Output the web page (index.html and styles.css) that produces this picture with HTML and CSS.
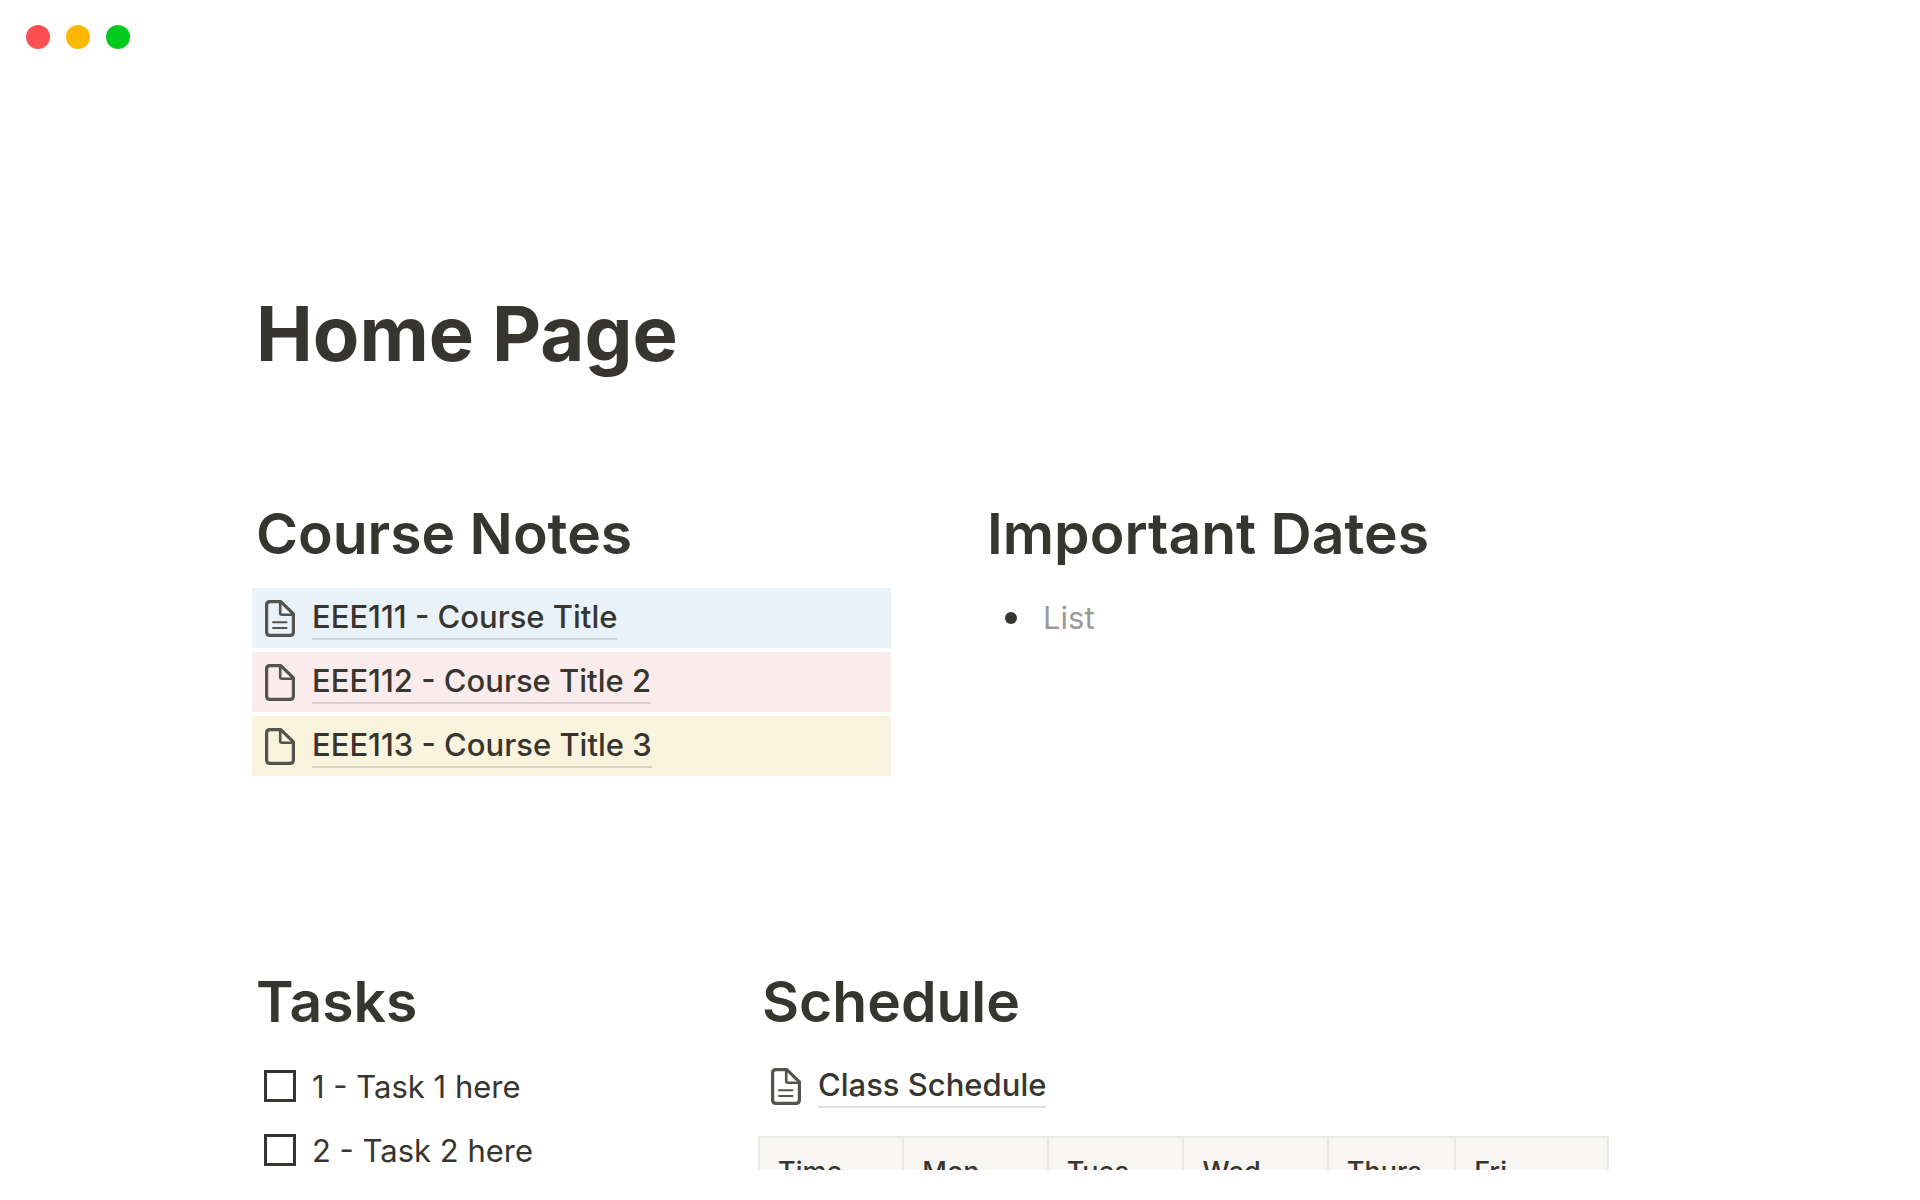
FILE: index.html
```html
<!DOCTYPE html>
<html lang="en">
<head>
    <meta charset="UTF-8">
    <meta name="viewport" content="width=device-width, initial-scale=1.0">
    <title>Home Page</title>
    <link rel="stylesheet" href="styles.css">
</head>
<body>

    <!-- Shared page icons -->
    <svg class="sprite" aria-hidden="true">
        <symbol id="page-empty" viewBox="0 0 30 37">
            <path d="M5 1.6H15.8L28.4 13.8V32Q28.4 35.4 25 35.4H5Q1.6 35.4 1.6 32V5Q1.6 1.6 5 1.6Z" fill="none" stroke="currentColor" stroke-width="3.2" stroke-linejoin="round"/>
            <path d="M15.2 2V12.8Q15.2 14.8 17.2 14.8H28" fill="none" stroke="currentColor" stroke-width="2.6"/>
        </symbol>
        <symbol id="page-text" viewBox="0 0 30 37">
            <use href="#page-empty"/>
            <path d="M8 22.3H21.5M8 28H21.5" fill="none" stroke="currentColor" stroke-width="2" stroke-linecap="round"/>
        </symbol>
    </svg>

    <div class="window">
        <div class="dots">
            <span class="dot red"></span>
            <span class="dot yellow"></span>
            <span class="dot green"></span>
        </div>

        <main class="page">
            <h1>Home Page</h1>

            <div class="columns top">
                <section>
                    <h2>Course Notes</h2>
                    <div class="list">
                        <div class="row blue">
                            <svg class="icon"><use href="#page-text"/></svg>
                            <a href="#">EEE111 - Course Title</a>
                        </div>
                        <div class="row pink">
                            <svg class="icon"><use href="#page-empty"/></svg>
                            <a href="#">EEE112 - Course Title 2</a>
                        </div>
                        <div class="row sand">
                            <svg class="icon"><use href="#page-empty"/></svg>
                            <a href="#">EEE113 - Course Title 3</a>
                        </div>
                    </div>
                </section>
                <section>
                    <h2>Important Dates</h2>
                    <ul class="dates">
                        <li>List</li>
                    </ul>
                </section>
            </div>

            <div class="columns bottom">
                <section>
                    <h2>Tasks</h2>
                    <div class="list">
                        <label class="task"><input type="checkbox">1 - Task 1 here</label>
                        <label class="task"><input type="checkbox">2 - Task 2 here</label>
                    </div>
                </section>
                <section>
                    <h2>Schedule</h2>
                    <div class="row">
                        <svg class="icon"><use href="#page-text"/></svg>
                        <a href="#">Class Schedule</a>
                    </div>
                    <table>
                        <colgroup>
                            <col class="wide"><col class="wide"><col class="mid"><col class="wide"><col class="narrow"><col class="last">
                        </colgroup>
                        <thead>
                            <tr>
                                <th>Time</th>
                                <th>Mon</th>
                                <th>Tues</th>
                                <th>Wed</th>
                                <th>Thurs</th>
                                <th>Fri</th>
                            </tr>
                        </thead>
                    </table>
                </section>
            </div>
        </main>
    </div>

</body>
</html>
```
FILE: styles.css
```css
* {
    box-sizing: border-box;
}
body {
    margin: 0;
    background: #fff;
    color: #37352f;
    font-family: Inter, "Liberation Sans", sans-serif;
    font-size: 31px;
}
.sprite {
    position: absolute;
    width: 0;
    height: 0;
}
.window {
    height: calc(100vh - 30px);
    overflow: hidden;
}

/* Window buttons */
.dots {
    display: flex;
    gap: 16px;
    padding: 25px 26px;
}
.dot {
    width: 24px;
    height: 24px;
    border-radius: 50%;
}
.red { background: #ff4f52; }
.yellow { background: #ffb800; }
.green { background: #00ca1b; }

.page {
    max-width: 1416px;
    margin: 0 auto;
    padding-top: 211px;
}
h1, h2 {
    margin: 0;
    padding-left: 4px;
}
h1 {
    font-size: 76px;
    line-height: 96px;
    font-weight: 700;
}
h2 {
    margin-bottom: 18px;
    font-size: 57px;
    line-height: 72px;
    font-weight: 600;
}

.columns {
    display: grid;
    column-gap: 92px;
}
.top {
    grid-template-columns: 639fr 685fr;
    margin-top: 117px;
}
.bottom {
    grid-template-columns: 414fr 910fr;
    margin-top: 190px;
}

/* Page links */
.list {
    display: flex;
    flex-direction: column;
    gap: 4px;
}
.row {
    display: flex;
    align-items: flex-start;
    gap: 17px;
    height: 60px;
    padding: 8px 13px;
}
.blue { background: #e9f2f8; }
.pink { background: #faebec; }
.sand { background: #faf3dd; }
.icon {
    width: 30px;
    height: 37px;
    margin-top: 4px;
    color: #55534e;
}
.row a {
    border-bottom: 2px solid rgba(55, 53, 47, 0.16);
    color: inherit;
    font-weight: 500;
    line-height: 42px;
    text-decoration: none;
}

.dates {
    margin: 0;
    padding: 0 0 0 22px;
    list-style: none;
    color: #9b9a97;
    line-height: 60px;
}
.dates li {
    display: flex;
    align-items: center;
    gap: 26px;
}
.dates li::before {
    content: "";
    width: 12px;
    height: 12px;
    border-radius: 50%;
    background: #37352f;
}

.task {
    display: flex;
    align-items: center;
    gap: 16px;
    height: 60px;
    padding-left: 12px;
}
.task input {
    appearance: none;
    width: 32px;
    height: 32px;
    margin: 0;
    border: 3px solid #37352f;
}
.task input:checked {
    background: #37352f;
}

/* Timetable */
table {
    width: 851px;
    max-width: 100%;
    margin-top: 20px;
    border-collapse: collapse;
    table-layout: fixed;
}
.wide { width: 17%; }
.mid { width: 16%; }
.narrow { width: 15%; }
.last { width: 18%; }
th {
    padding: 13px 18px;
    border: 2px solid #e9e9e7;
    background: #f7f6f3;
    font-size: 27px;
    font-weight: 500;
    line-height: 42px;
    text-align: left;
}
```
